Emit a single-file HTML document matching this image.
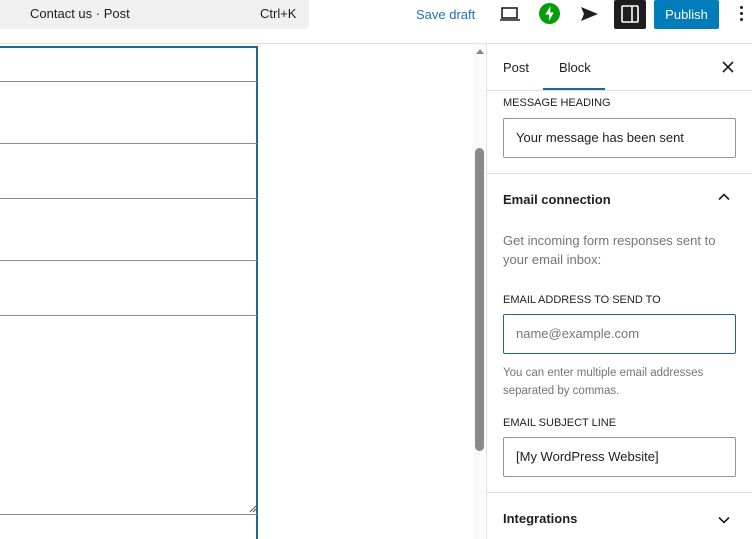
<!DOCTYPE html>
<html style="width:752px;height:539px;overflow:hidden"><head><meta charset="utf-8"><style>
*{box-sizing:border-box;margin:0;padding:0}
body{width:752px;height:539px;overflow:hidden;background:#fff;font-family:"Liberation Sans",sans-serif;color:#1e1e1e;position:relative;font-size:13px}
.a{position:absolute}
.lbl{font-size:11px;font-weight:500;text-transform:uppercase;color:#1e1e1e}
.inp{position:absolute;left:503px;width:233px;height:40px;border:1px solid #949494;border-radius:2px;padding:0 12px;line-height:38px;font-size:13px}
.hl{position:absolute;left:0;width:257px;height:1px;background:#8c8c8c}
</style></head><body>
<div class="a" style="left:0;top:0;width:309px;height:29px;background:#f0f0f0;border-radius:0 0 4px 0"></div>
<div class="a" style="left:30px;top:6px;font-size:13px;color:#1e1e1e">Contact us · Post</div>
<div class="a" style="left:260px;top:6px;font-size:13px;color:#1e1e1e">Ctrl+K</div>
<div class="a" style="left:0;top:43px;width:752px;height:1px;background:#e0e0e0"></div>
<div class="a" style="left:416px;top:7px;font-size:13px;color:#2271b1">Save draft</div>
<svg class="a" style="left:499px;top:5px" width="22" height="18" viewBox="0 0 22 18"><rect x="3" y="3" width="15" height="10" fill="none" stroke="#1e1e1e" stroke-width="1.6"/><path d="M1 15h20" stroke="#1e1e1e" stroke-width="1.6"/></svg>
<svg class="a" style="left:539px;top:3px" width="21" height="21" viewBox="0 0 20 20"><circle cx="10" cy="10" r="10" fill="#069e08"/><path d="M10.8 3 6 11h3.5v6l4.6-8h-3.3z" fill="#fff"/></svg>
<svg class="a" style="left:580px;top:6px" width="20" height="16" viewBox="0 0 20 16"><path d="M1 1l17 7-17 7 3-7z" fill="#1e1e1e"/></svg>
<div class="a" style="left:614px;top:0;width:32px;height:29px;background:#1e1e1e;border-radius:2px"></div>
<svg class="a" style="left:621px;top:5px" width="18" height="18" viewBox="0 0 18 18"><rect x="1" y="1" width="16" height="16" rx="1" fill="none" stroke="#fff" stroke-width="1.6"/><path d="M11 1v16" stroke="#fff" stroke-width="1.6"/></svg>
<div class="a" style="left:654px;top:0;width:65px;height:29px;background:#007cba;border-radius:2px;color:#fff;font-size:13px;text-align:center;line-height:29px">Publish</div>
<div class="a" style="left:740px;top:6px;width:3px;height:3px;background:#1e1e1e;border-radius:50%;box-shadow:0 6px 0 #1e1e1e,0 12px 0 #1e1e1e"></div>
<div class="a" style="left:-2px;top:46px;width:260px;height:493px;border:2px solid #1e6a8f;border-bottom:none"></div>
<div class="hl" style="top:81px"></div>
<div class="hl" style="top:143px"></div>
<div class="hl" style="top:198px"></div>
<div class="hl" style="top:260px"></div>
<div class="hl" style="top:315px"></div>
<div class="hl" style="top:514px"></div>
<svg class="a" style="left:249px;top:505px" width="8" height="8"><path d="M1 7 7 1M4 7 7 4" stroke="#555" stroke-width="1"/></svg>
<div class="a" style="left:473px;top:44px;width:12px;height:495px;background:#fafafa"></div>
<svg class="a" style="left:475px;top:47px" width="10" height="8"><path d="M1 7 5 2 9 7z" fill="#888"/></svg>
<div class="a" style="left:475px;top:148px;width:9px;height:303px;background:#8a8a8a;border-radius:5px"></div>
<div class="a" style="left:486px;top:44px;width:1px;height:495px;background:#e0e0e0"></div>
<div class="a" style="left:503px;top:60px;font-size:13px">Post</div>
<div class="a" style="left:559px;top:60px;font-size:13px">Block</div>
<div class="a" style="left:543px;top:88px;width:62px;height:2px;background:#1e6a8f"></div>
<svg class="a" style="left:722px;top:61px" width="12" height="12"><path d="M1 1l10 10M11 1 1 11" stroke="#1e1e1e" stroke-width="1.6"/></svg>
<div class="a" style="left:487px;top:90px;width:265px;height:1px;background:#e0e0e0"></div>
<div class="a lbl" style="left:503px;top:97px">Message heading</div>
<div class="inp" style="top:118px">Your message has been sent</div>
<div class="a" style="left:487px;top:173px;width:265px;height:1px;background:#e0e0e0"></div>
<div class="a" style="left:503px;top:192px;font-weight:600;font-size:13px">Email connection</div>
<svg class="a" style="left:718px;top:193px" width="12" height="8"><path d="M1 6.5 6 1.5l5 5" fill="none" stroke="#1e1e1e" stroke-width="1.6"/></svg>
<div class="a" style="left:503px;top:231px;font-size:13px;color:#757575;line-height:19px;width:230px">Get incoming form responses sent to your email inbox:</div>
<div class="a lbl" style="left:503px;top:294px">Email address to send to</div>
<div class="inp" style="top:314px;height:40px;border:1.5px solid #1e6a8f;color:#757575">name@example.com</div>
<div class="a" style="left:503px;top:364px;font-size:11.5px;color:#757575;line-height:18px;width:230px">You can enter multiple email addresses separated by commas.</div>
<div class="a lbl" style="left:503px;top:417px">Email subject line</div>
<div class="inp" style="top:437px">[My WordPress Website]</div>
<div class="a" style="left:487px;top:492px;width:265px;height:1px;background:#e0e0e0"></div>
<div class="a" style="left:503px;top:511px;font-weight:600;font-size:13px">Integrations</div>
<svg class="a" style="left:718px;top:516px" width="12" height="8"><path d="M1 1.5 6 6.5l5-5" fill="none" stroke="#1e1e1e" stroke-width="1.6"/></svg>
</body></html>
